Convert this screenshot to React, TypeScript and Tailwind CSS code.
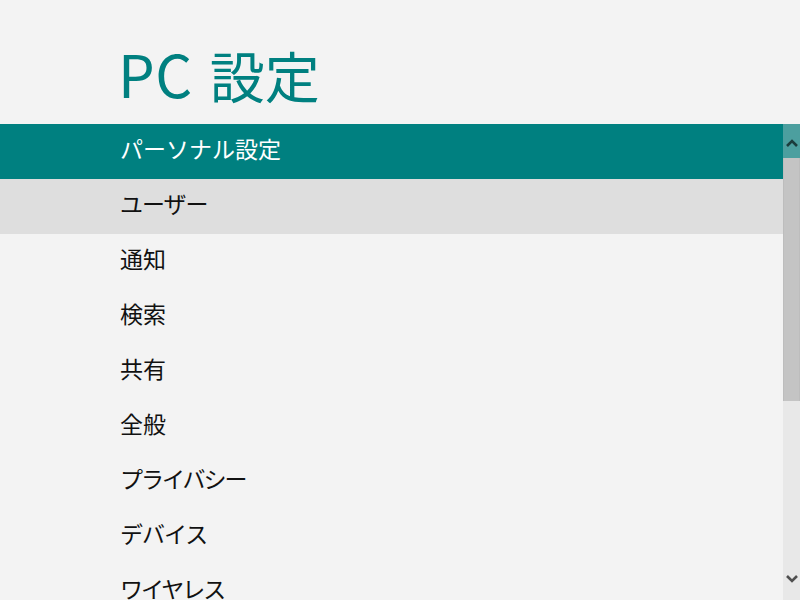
const items = [
  { label: "ユーザー", track: "tracking-[-1px]" },
  { label: "通知", track: "" },
  { label: "検索", track: "" },
  { label: "共有", track: "" },
  { label: "全般", track: "" },
  { label: "プライバシー", track: "tracking-[-2px]" },
  { label: "デバイス", track: "tracking-[-1px]" },
  { label: "ワイヤレス", track: "tracking-[-2px]" },
];

function Chevron({ up, color }: { up?: boolean; color: string }) {
  return (
    <svg width="12" height="9" viewBox="0 0 12 9" className="block">
      <path
        d={up ? "M1 8 L6 3 L11 8" : "M1 1 L6 6 L11 1"}
        fill="none"
        stroke={color}
        strokeWidth="2.6"
      />
    </svg>
  );
}

const row = "h-[55px] shrink-0 text-[23px] flex items-center pl-[120px] pb-[6px]";

export default function App() {
  const font = { fontFamily: '"Noto Sans CJK JP", "Noto Sans", sans-serif' };

  return (
    <div className="w-[800px] h-[600px] overflow-hidden bg-[#f3f3f3] flex flex-col" style={font}>
      <div className="h-[124px] shrink-0 pl-[118px] pt-[38px]">
        <h1 className="flex items-baseline leading-[70px] font-normal text-[#008080]">
          <span className="text-[58px] tracking-[0.5px]">PC</span>
          <span className="text-[55px] ml-[17px]">設定</span>
        </h1>
      </div>

      <div className="flex flex-1 min-h-0">
        <ul className="flex-1 flex flex-col">
          <li className={row + " bg-[#008080] text-white"}>パーソナル設定</li>
          {items.map((it, i) => (
            <li
              key={it.label}
              className={(i === 0 ? row + " bg-[#dedede] text-[#111] " : row + " text-[#111] ") + it.track}
            >
              {it.label}
            </li>
          ))}
        </ul>

        {/* scrollbar */}
        <div className="w-[17px] shrink-0 flex flex-col bg-[#e8e8e8]">
          <div className="h-[34px] shrink-0 bg-[#4c9f9f] flex items-center justify-center pt-[2px]">
            <Chevron up color="#1b3d3d" />
          </div>
          <div className="h-[243px] shrink-0 bg-[#c4c4c4] border-x border-[#bdbdbd]" />
          <div className="flex-1 flex items-end justify-center pb-[16px]">
            <Chevron color="#505050" />
          </div>
        </div>
      </div>
    </div>
  );
}
